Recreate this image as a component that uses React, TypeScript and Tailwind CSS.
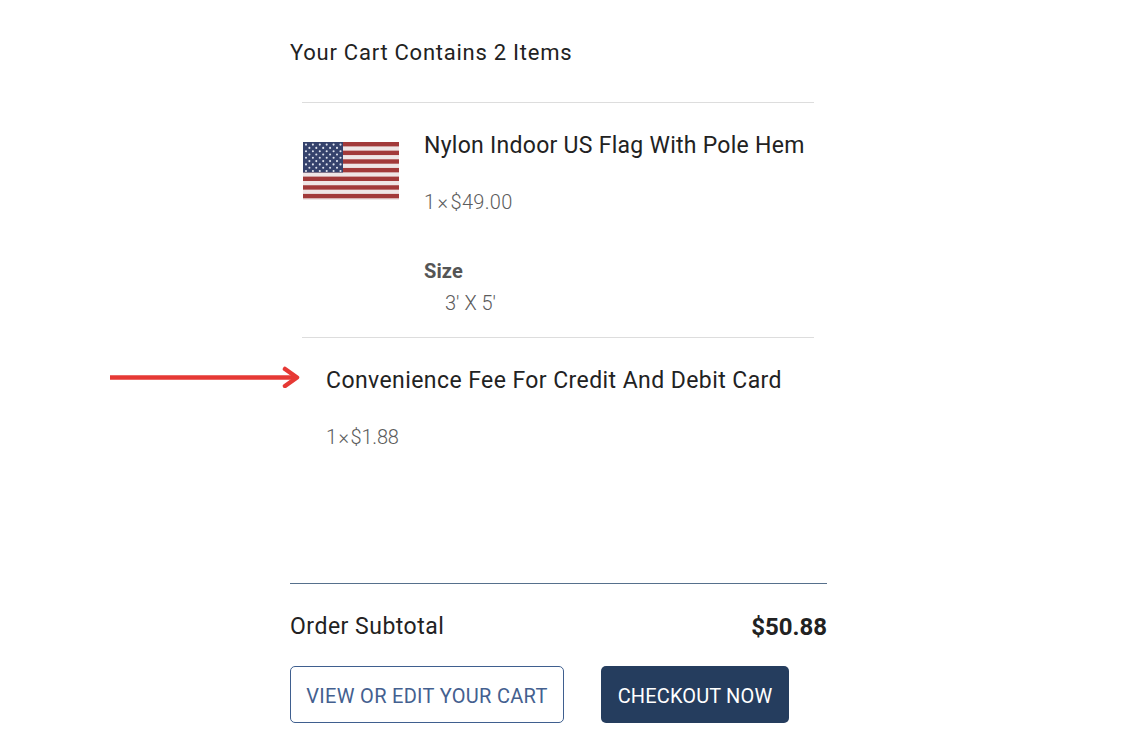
const font = "font-['Roboto',sans-serif]";

function Flag() {
  const stripes = [0, 1, 2, 3, 4, 5, 6];
  const stars: [number, number][] = [];
  for (let r = 0; r < 9; r++) {
    const count = r % 2 === 0 ? 6 : 5;
    for (let c = 0; c < count; c++) {
      stars.push([(r % 2 === 0 ? 3 : 6.4) + c * 6.9, 2.6 + r * 3.3]);
    }
  }
  return (
    <svg width="96" height="58" viewBox="0 0 96 58" className="block">
      <rect width="96" height="58" fill="#efe6e6" />
      {stripes.map((i) => (
        <rect key={i} x="0" y={i * 8.65} width="96" height="4.4" fill="#a23a3a" />
      ))}
      <rect width="40" height="30.5" fill="#35426c" />
      {stars.map(([x, y], i) => (
        <circle key={i} cx={x} cy={y} r="1.05" fill="#dfe3ee" />
      ))}
    </svg>
  );
}

export default function App() {
  return (
    <div className={`${font} w-[1125px] h-[750px] bg-white overflow-hidden relative text-[#222]`}>
      <div className="absolute left-[110px] top-[366px]">
        <svg width="192" height="22" viewBox="0 0 192 22" className="block">
          <path d="M0 11.5H185" stroke="#e63935" strokeWidth="4.5" fill="none" />
          <path d="M175 3L187 11.5L175 20" stroke="#e63935" strokeWidth="4.5" fill="none" strokeLinecap="round" strokeLinejoin="round" />
        </svg>
      </div>

      <div className="ml-[290px] w-[537px] flex flex-col">
        <h2 className="h-[102px] pt-[39px] text-[22px] leading-[28px] font-normal tracking-[0.75px]">
          Your Cart Contains 2 Items
        </h2>

        <div className="ml-3 mr-[13px] border-t border-[#dddddd]">
          <div className="h-[234px] flex">
            <div className="w-[122px] pl-[1px] pt-[39px] shrink-0">
              <Flag />
            </div>
            <div className="flex flex-col">
              <div className="mt-[28px] text-[23px] leading-[30px] tracking-[0.27px] whitespace-nowrap">
                Nylon Indoor US Flag With Pole Hem
              </div>
              <div className="mt-[26px] text-[20px] leading-[30px] font-light text-[#5c5c5c] tracking-[0.3px] [word-spacing:-3px]">1 × $49.00</div>
              <div className="mt-[42px] text-[20px] leading-[24px] font-bold text-[#555] tracking-[0.1px]">Size</div>
              <div className="mt-[6px] pl-[21px] text-[20px] leading-[28px] font-light text-[#5c5c5c]">3' X 5'</div>
            </div>
          </div>
        </div>

        <div className="ml-3 mr-[13px] border-t border-[#dddddd] h-[246px] pl-6">
          <div className="mt-[28px] text-[23px] leading-[30px] tracking-[0.42px] whitespace-nowrap">
            Convenience Fee For Credit And Debit Card
          </div>
          <div className="mt-[26px] text-[20px] leading-[30px] font-light text-[#5c5c5c] tracking-[-0.2px] [word-spacing:-3px]">1 × $1.88</div>
        </div>

        <div className="border-t border-[#56708c] pt-[23px] flex justify-between items-center h-[83px] pb-[19px]">
          <span className="text-[23px] leading-[30px] tracking-[0.5px]">Order Subtotal</span>
          <span className="text-[24px] leading-[30px] font-bold">$50.88</span>
        </div>

        <div className="flex gap-[37px]">
          <button className="w-[274px] h-[57px] pt-0.5 rounded-[5px] border border-[#3f5f8f] bg-white text-[#44608f] text-[20px] tracking-[0.3px] whitespace-nowrap">
            VIEW OR EDIT YOUR CART
          </button>
          <button className="w-[188px] h-[57px] pt-0.5 rounded-[5px] bg-[#253d5e] text-white text-[20px] tracking-[0.15px] whitespace-nowrap">
            CHECKOUT NOW
          </button>
        </div>
      </div>
    </div>
  );
}
